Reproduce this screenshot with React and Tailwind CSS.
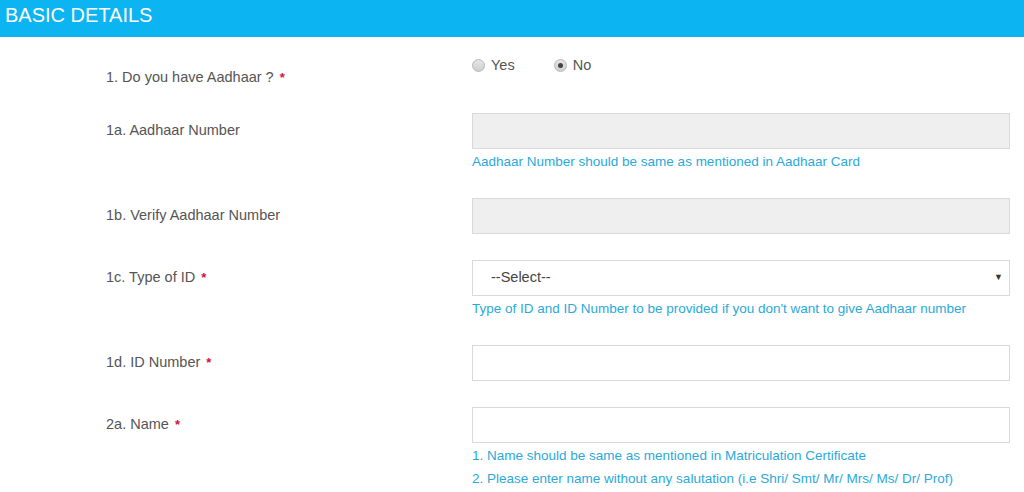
import React from "react";

const font = { fontFamily: '"Liberation Sans", Arial, sans-serif' };

function Star() {
  return <span className="ml-[6px] text-[13px] font-bold text-[#d0103a]">*</span>;
}

function Radio({ checked, label }) {
  return (
    <label className="flex items-center gap-[6px]">
      <span className="flex h-[13px] w-[13px] items-center justify-center rounded-full border border-[#b8b8b8] bg-gradient-to-b from-[#e6e6e6] to-[#cfcfcf]">
        {checked && <span className="h-[5px] w-[5px] rounded-full bg-[#444]" />}
      </span>
      <span className="text-[14.5px] text-[#555]">{label}</span>
    </label>
  );
}

function Row({ label, required, children, help }) {
  return (
    <div className="mb-[26px] flex">
      <div className="flex h-[36px] w-[472px] shrink-0 items-center pl-[106px] text-[14.5px] text-[#555]">
        {label}
        {required && <Star />}
      </div>
      <div className="flex-1 pr-[14px]">
        {children}
        {help && (
          <div className="mt-[3px] flex flex-col gap-[3px] text-[13.5px] leading-[20px] text-[#2aaad9]">
            {help.map((h) => (
              <div key={h}>{h}</div>
            ))}
          </div>
        )}
      </div>
    </div>
  );
}

function TextBox({ disabled }) {
  return (
    <div
      className={
        "h-[36px] w-full border border-[#d9d9d9] " +
        (disabled ? "bg-[#efefef]" : "bg-white")
      }
    />
  );
}

export default function App() {
  return (
    <div className="min-h-screen bg-white" style={font}>
      {/* header */}
      <div className="flex h-[37px] items-start bg-[#0cb4f1] pl-[5px] pt-[3px]">
        <h1 className="text-[20px] leading-[24px] text-white">BASIC DETAILS</h1>
      </div>

      <div className="pt-[18px]">
        {/* Q1 */}
        <div className="mb-[26px] flex">
          <div className="w-[472px] shrink-0 pl-[106px] pt-[13px] text-[14.5px] leading-[18px] text-[#555]">
            1. Do you have Aadhaar ?
            <Star />
          </div>
          <div className="flex h-[21px] items-center gap-[39px]">
            <Radio label="Yes" />
            <Radio checked label="No" />
          </div>
        </div>

        <Row
          label="1a. Aadhaar Number"
          help={["Aadhaar Number should be same as mentioned in Aadhaar Card"]}
        >
          <TextBox disabled />
        </Row>

        <Row label="1b. Verify Aadhaar Number">
          <TextBox disabled />
        </Row>

        <Row
          label="1c. Type of ID"
          required
          help={["Type of ID and ID Number to be provided if you don't want to give Aadhaar number"]}
        >
          <div className="flex h-[36px] w-full items-center justify-between border border-[#d9d9d9] bg-white pl-[18px] pr-[6px] text-[14.5px] text-[#444]">
            <span>--Select--</span>
            <span className="text-[9px] text-[#333]">▼</span>
          </div>
        </Row>

        <Row label="1d. ID Number" required>
          <TextBox />
        </Row>

        <Row
          label="2a. Name"
          required
          help={[
            "1. Name should be same as mentioned in Matriculation Certificate",
            "2. Please enter name without any salutation (i.e Shri/ Smt/ Mr/ Mrs/ Ms/ Dr/ Prof)",
          ]}
        >
          <TextBox />
        </Row>
      </div>
    </div>
  );
}
